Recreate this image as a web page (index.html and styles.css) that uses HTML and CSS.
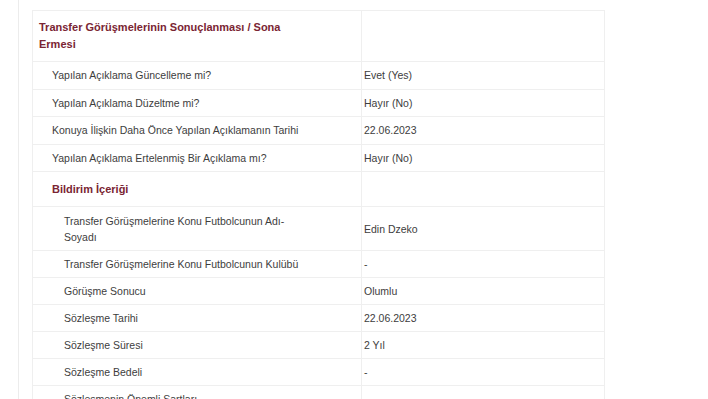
FILE: index.html
```html
<!DOCTYPE html>
<html lang="tr">
<head>
<meta charset="utf-8">
<link rel="stylesheet" href="styles.css">
</head>
<body>
<div class="page">
  <table class="kap">
    <colgroup><col class="c1"><col class="c2"></colgroup>
    <tr class="head">
      <td class="lbl">Transfer Görüşmelerinin Sonuçlanması / Sona Ermesi</td>
      <td class="val"></td>
    </tr>
    <tr><td class="lbl l1">Yapılan Açıklama Güncelleme mi?</td><td class="val">Evet (Yes)</td></tr>
    <tr><td class="lbl l1">Yapılan Açıklama Düzeltme mi?</td><td class="val">Hayır (No)</td></tr>
    <tr><td class="lbl l1">Konuya İlişkin Daha Önce Yapılan Açıklamanın Tarihi</td><td class="val">22.06.2023</td></tr>
    <tr><td class="lbl l1">Yapılan Açıklama Ertelenmiş Bir Açıklama mı?</td><td class="val">Hayır (No)</td></tr>
    <tr class="sub"><td class="lbl l1">Bildirim İçeriği</td><td class="val"></td></tr>
    <tr class="tall"><td class="lbl l2">Transfer Görüşmelerine Konu Futbolcunun Adı-Soyadı</td><td class="val">Edin Dzeko</td></tr>
    <tr><td class="lbl l2">Transfer Görüşmelerine Konu Futbolcunun Kulübü</td><td class="val">-</td></tr>
    <tr><td class="lbl l2">Görüşme Sonucu</td><td class="val">Olumlu</td></tr>
    <tr><td class="lbl l2">Sözleşme Tarihi</td><td class="val">22.06.2023</td></tr>
    <tr><td class="lbl l2">Sözleşme Süresi</td><td class="val">2 Yıl</td></tr>
    <tr><td class="lbl l2">Sözleşme Bedeli</td><td class="val">-</td></tr>
    <tr><td class="lbl l2">Sözleşmenin Önemli Şartları</td><td class="val">-</td></tr>
  </table>
</div>
</body>
</html>
```
FILE: styles.css
```css
html, body {
  margin: 0;
  padding: 0;
  background: #fff;
  overflow: hidden;
}
body {
  font-family: "Liberation Sans", Arial, sans-serif;
  font-size: 10.5px;
  color: #3d3d3d;
}
.page {
  margin-left: 18px;
  border-left: 1px solid #ececec;
  padding: 10px 0 0 13px;
  height: 400px;
}
.kap {
  width: 572px;
  table-layout: fixed;
  border-collapse: collapse;
  border: 1px solid #efefef;
}
.c1 { width: 329px; }
.c2 { width: 243px; }
.kap td {
  border: 1px solid #efefef;
  line-height: 16px;
  vertical-align: middle;
  padding: 5px 0;
}
.kap td.lbl {
  padding-right: 47px;
}
.kap td.val {
  padding-left: 2px;
}
.kap td.l1 {
  padding-left: 19px;
  line-height: 16.5px;
}
.kap td.l2 { padding-left: 31px; }
.kap .tall td.l2 {
  padding-top: 6px;
  padding-bottom: 5px;
}
.kap .head td.lbl {
  padding: 8px 47px 8px 6px;
  line-height: 17px;
  font-weight: bold;
  font-size: 11px;
  color: #7a2533;
}
.kap .sub td.lbl {
  padding-top: 9px;
  padding-bottom: 9px;
  line-height: 16px;
  font-weight: bold;
  font-size: 11px;
  color: #7a2533;
}
```
